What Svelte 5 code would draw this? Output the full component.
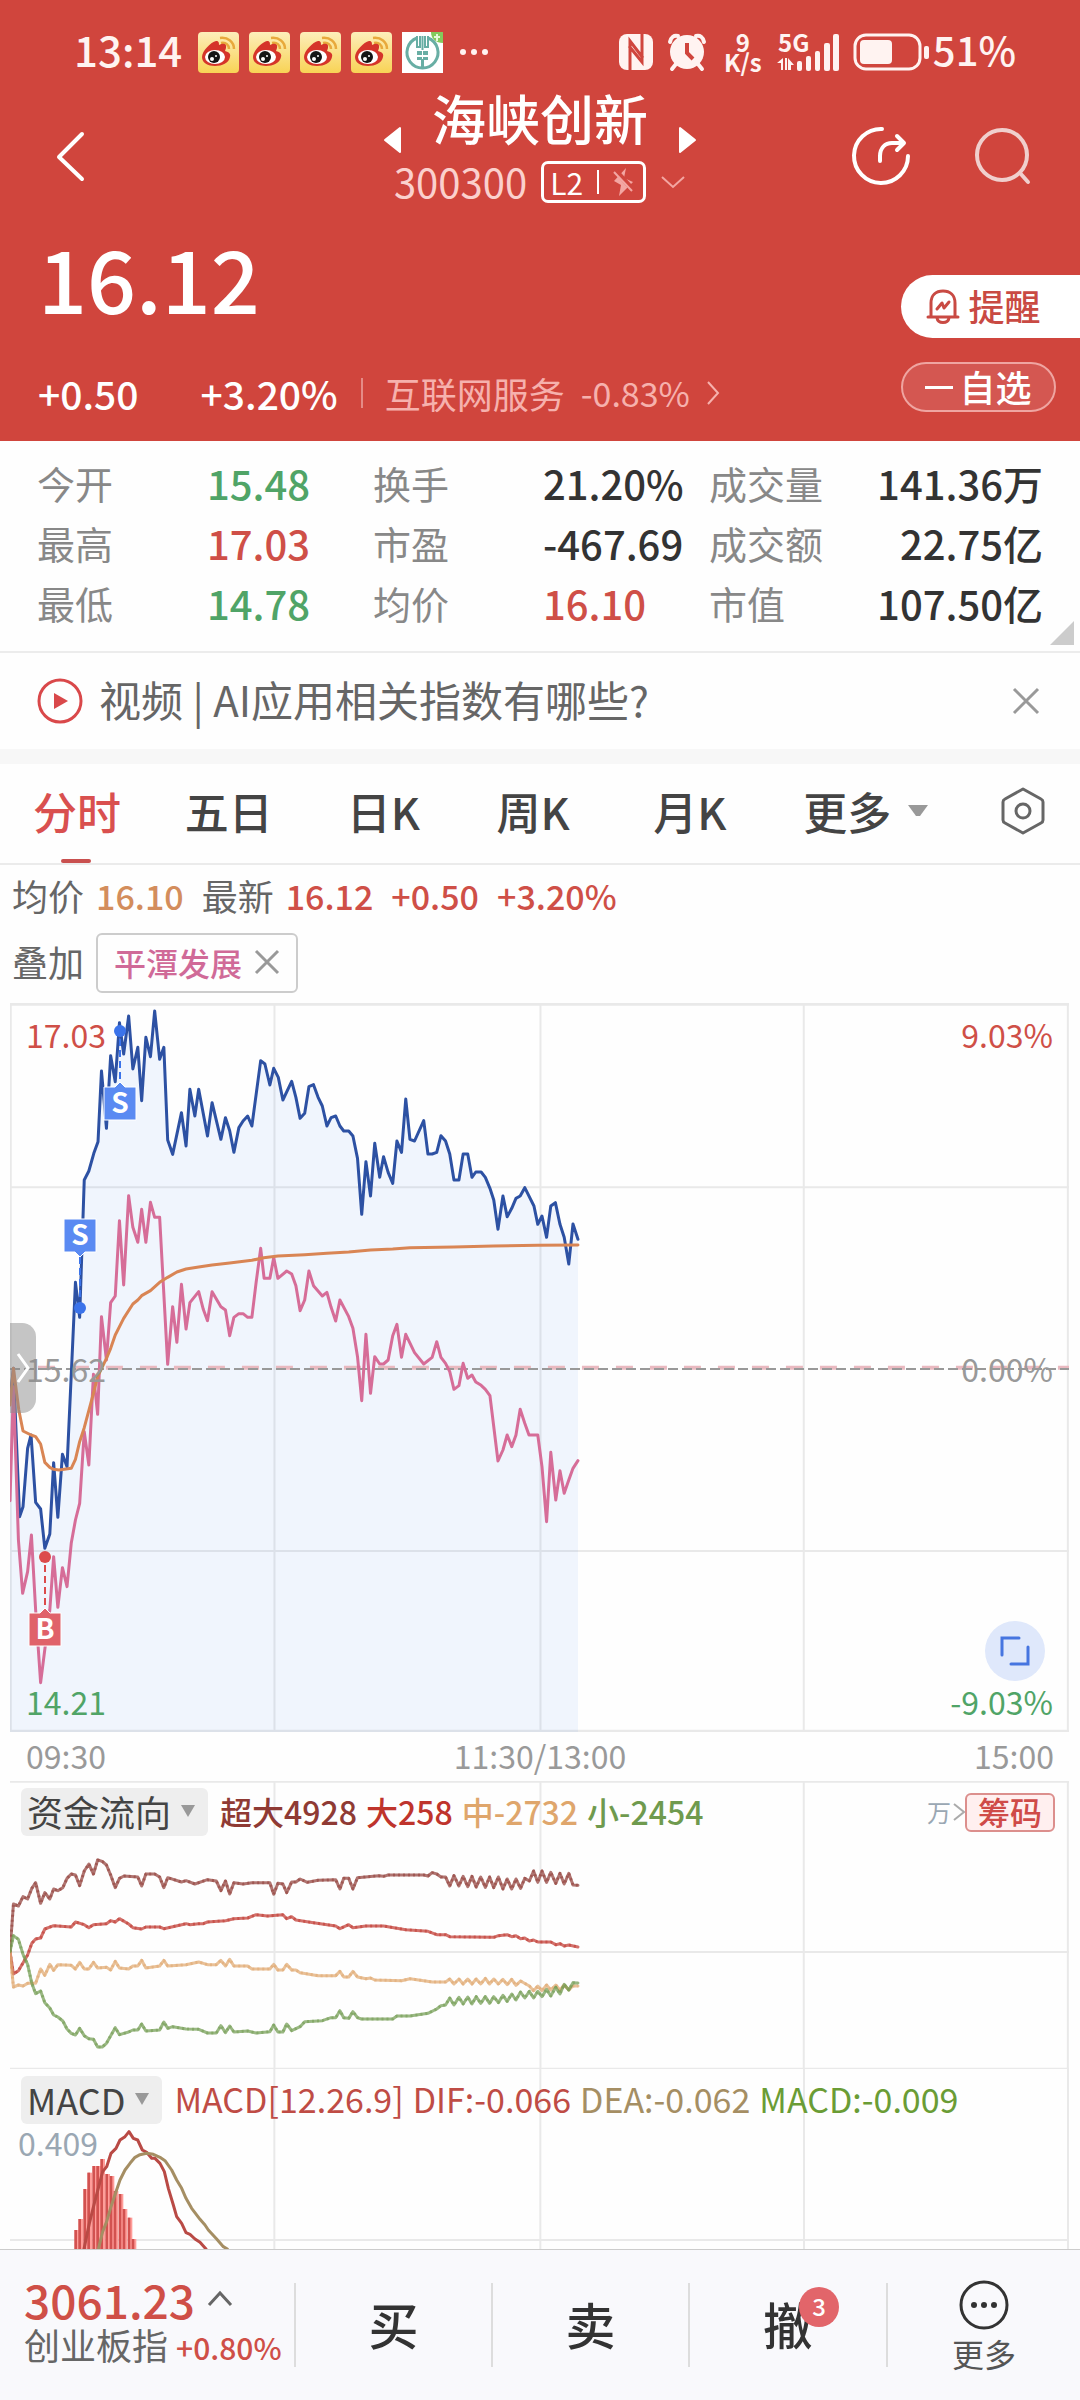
<script>
    let tabs = ["分时", "五日", "日K", "周K", "月K"];
    let active = "分时";
    let showNews = true;
    let showOverlay = true;

    let stats = [
        { label: "今开", value: "15.48", tone: "green" },
        { label: "换手", value: "21.20%", tone: "" },
        { label: "成交量", value: "141.36万", tone: "" },
        { label: "最高", value: "17.03", tone: "red" },
        { label: "市盈", value: "-467.69", tone: "" },
        { label: "成交额", value: "22.75亿", tone: "" },
        { label: "最低", value: "14.78", tone: "green" },
        { label: "均价", value: "16.10", tone: "red" },
        { label: "市值", value: "107.50亿", tone: "" },
    ];

    // price chart lines
    let price = "26,1235 36,1135 52,1580 61,1550 73,1375 82,1335 94,1537 107,1557 118,1675 131,1632 141,1418 152,1582 164,1393 176,1430 190,1080 198,877 209,982 221,570 233,543 246,490 257,455 266,243 279,415 290,197 302,275 313,98 324,192 337,78 348,237 361,172 371,332 382,142 394,200 405,63 418,208 429,172 439,450 452,493 475,368 487,468 497,298 510,378 520,298 543,438 555,338 578,448 590,383 601,422 612,487 625,413 636,393 648,378 659,408 682,212 693,222 706,285 716,235 728,262 740,330 763,274 774,322 785,385 797,370 808,290 820,284 832,322 843,348 855,408 866,383 878,378 889,408 899,423 912,423 923,438 935,505 946,673 957,515 969,618 980,460 993,562 1003,500 1015,547 1027,580 1038,453 1050,487 1061,327 1072,448 1084,453 1108,392 1119,492 1130,492 1142,487 1153,437 1165,453 1176,492 1187,570 1200,570 1211,492 1223,492 1234,562 1244,546 1258,546 1269,562 1281,595 1291,630 1302,718 1315,618 1326,680 1338,655 1349,625 1360,618 1372,593 1396,648 1406,703 1417,678 1429,742 1440,648 1452,638 1464,703 1475,742 1487,822 1498,702 1511,748";
    let overlay = "27,1532 36,1190 49,1650 60,1810 73,1745 83,1635 94,1860 107,2078 131,1860 141,1700 152,1852 164,1733 176,1790 187,1660 198,1590 209,1540 221,1325 233,1425 245,1153 256,1273 266,980 279,1110 290,938 302,918 313,692 324,885 337,617 348,712 361,757 371,658 382,757 394,637 405,682 418,682 439,1123 452,950 463,1057 475,883 487,1017 497,938 520,905 532,958 543,992 555,905 578,950 590,960 601,1037 612,982 625,971 636,971 648,982 659,982 670,878 682,775 691,865 706,865 716,803 727,865 750,843 763,852 774,887 785,962 797,930 808,843 820,887 843,918 855,907 866,952 878,993 889,930 912,980 923,1015 935,1100 946,1232 957,1033 969,1210 980,1100 993,1122 1003,1122 1015,1110 1027,1037 1038,1003 1050,1102 1061,1033 1084,1088 1108,1122 1130,1102 1142,1055 1153,1102 1165,1120 1176,1145 1187,1198 1200,1187 1211,1120 1223,1165 1234,1155 1244,1176 1258,1186 1269,1198 1281,1217 1302,1413 1315,1380 1326,1335 1338,1370 1349,1335 1360,1258 1372,1300 1383,1335 1406,1335 1417,1430 1429,1595 1440,1387 1453,1530 1464,1442 1475,1510 1487,1470 1498,1435 1511,1412";
    let average = "27,1245 36,1135 50,1260 61,1323 82,1335 94,1340 107,1362 118,1417 131,1432 141,1438 155,1440 187,1435 198,1408 209,1355 221,1313 245,1210 256,1160 279,1105 290,1075 302,1035 324,985 348,942 361,930 371,917 394,902 418,877 439,862 463,846 487,837 520,831 555,825 601,819 659,811 690,803 727,798 797,794 855,790 912,786 969,780 1027,777 1072,773 1187,771 1290,768 1406,766 1511,765";

    let flows = [
        { name: "超大4928", color: "#8f3a34", points: "27,545 36,402 49,408 61,380 73,387 84,355 94,338 107,400 118,368 131,387 141,357 152,362 165,353 176,325 187,312 198,315 209,347 221,303 233,282 245,312 256,270 268,274 279,285 290,315 302,353 313,325 325,318 361,321 371,348 382,312 405,312 418,321 429,353 439,323 475,336 487,332 510,342 543,329 566,333 578,362 590,333 601,372 612,338 636,342 659,338 706,338 716,373 727,340 740,342 750,368 763,336 774,336 785,327 804,337 832,331 878,329 889,357 899,325 912,325 923,357 935,323 990,317 1003,319 1015,315 1108,315 1119,318 1130,308 1142,312 1153,321 1165,321 1176,348 1187,317 1200,348 1211,319 1223,350 1234,319 1245,351 1257,321 1269,352 1280,321 1291,353 1303,321 1315,357 1326,327 1338,357 1349,327 1361,355 1372,325 1384,333 1395,303 1406,337 1417,303 1429,337 1440,307 1453,340 1464,310 1475,342 1487,310 1498,345 1511,346" },
        { name: "大258", color: "#bf342c", points: "27,545 36,612 49,602 73,555 84,520 94,507 107,504 118,477 141,467 187,471 198,456 221,464 233,473 245,464 279,461 290,452 302,456 313,446 337,462 348,473 371,477 382,471 418,471 429,476 487,461 497,464 520,461 532,461 543,456 590,452 612,446 648,444 670,434 700,438 740,434 750,446 763,440 774,450 820,458 878,468 889,476 912,464 923,473 957,468 1003,468 1061,479 1119,484 1142,494 1165,494 1176,500 1291,502 1303,497 1326,494 1338,500 1349,497 1361,506 1372,504 1384,513 1395,510 1406,516 1440,516 1453,524 1464,521 1475,528 1487,525 1511,531" },
        { name: "中-2732", color: "#dfa66c", points: "27,545 36,651 49,645 61,648 73,640 94,640 107,597 118,616 131,583 141,601 152,584 187,586 198,597 209,577 221,597 233,597 245,577 256,594 279,592 290,600 302,574 313,594 337,597 348,588 361,588 371,571 382,594 418,588 429,571 439,588 487,584 520,576 543,584 566,584 578,571 590,588 601,568 612,588 648,588 659,597 706,597 716,583 727,600 740,600 750,583 763,600 774,600 785,608 832,617 878,617 889,604 899,621 912,621 923,604 935,621 957,626 969,624 980,630 1050,632 1072,626 1130,636 1165,636 1176,627 1187,642 1200,627 1211,642 1223,627 1234,642 1245,627 1257,642 1269,625 1280,642 1291,627 1303,642 1315,628 1326,644 1338,628 1349,646 1361,633 1384,648 1395,662 1406,648 1417,662 1429,645 1440,660 1453,645 1464,660 1475,645 1487,660 1498,648 1511,648" },
        { name: "小-2454", color: "#6f9a4e", points: "27,545 36,497 49,508 61,553 73,583 84,640 94,671 107,663 118,698 131,714 141,735 152,741 165,753 176,777 187,790 198,795 209,775 221,797 233,806 245,808 256,831 268,831 279,820 302,773 313,794 337,786 348,780 361,780 371,762 382,783 418,780 429,756 439,775 452,770 487,777 520,778 543,789 566,789 578,767 590,788 601,768 612,786 648,783 670,789 706,785 716,765 727,786 740,786 750,762 763,782 785,770 797,755 843,752 866,743 878,743 889,722 899,743 912,745 923,725 935,743 945,747 1027,747 1038,738 1072,738 1119,730 1142,717 1153,707 1165,705 1176,684 1187,705 1200,682 1211,702 1223,681 1234,702 1245,680 1257,700 1269,680 1280,700 1291,680 1303,698 1315,676 1326,694 1338,672 1349,690 1361,666 1372,684 1384,664 1395,684 1406,664 1417,680 1429,658 1440,678 1453,652 1464,672 1475,643 1487,660 1498,638 1511,639" },
    ];

    let bars = [[227,330],[239,297],[254,207],[266,158],[281,138],[293,138],[305,117],[320,162],[333,168],[345,213],[360,222],[372,267],[387,293],[399,357]];
    let dif = "252,387 268,310 283,250 308,155 320,140 333,100 348,85 360,60 375,50 387,35 400,55 413,60 427,90 440,97 455,115 465,115 480,130 493,155 505,205 520,255 530,290 545,310 558,338 570,343 585,357 600,367 618,387";
    let dea = "295,387 308,335 320,305 333,260 348,215 360,180 375,150 390,130 405,112 420,104 440,100 460,103 480,112 495,122 515,150 530,180 545,205 558,235 575,265 600,298 615,315 625,330 650,357 670,380 682,387";
</script>

{#snippet marker(letter)}
    <svg width="34" height="98" viewBox="0 0 34 98">
        <path d="M17 14V56" stroke="currentColor" stroke-width="2" stroke-dasharray="7 4" />
        <circle cx="17" cy="6" r="6" fill="currentColor" />
        <path class="tag" d="M1 62H12L17 57L22 62H33V95H1Z" />
        <text x="17" y="88" text-anchor="middle">{letter}</text>
    </svg>
{/snippet}

<main>
    <header>
        <div class="status">
            <span class="clock">13:14</span>
            <div class="apps">
                {#each [1, 2, 3, 4] as n}
                    <svg width="41" height="41" viewBox="0 0 41 41">
                        <defs>
                            <linearGradient id="wb{n}" x1="0" y1="0" x2="0" y2="1">
                                <stop offset="0" stop-color="#fdeebb" />
                                <stop offset="1" stop-color="#f8d355" />
                            </linearGradient>
                        </defs>
                        <rect width="41" height="41" rx="4" fill="url(#wb{n})" />
                        <path d="M22 6c8-1 14 4 14 11M23 11c5-1 8 2 8 6" fill="none" stroke="#e8a93c" stroke-width="2.500" />
                        <path d="M4 25c0-6 9-15 14-16 3 0 3 2 3 4 4-2 8-2 7 3l-1 3c4 1 6 3 5 6-1 6-8 9-15 9C10 34 4 31 4 25Z" fill="#d5342a" />
                        <ellipse cx="17" cy="25" rx="10" ry="7" fill="#fff" />
                        <circle cx="16" cy="25" r="6" fill="#151515" />
                        <circle cx="14" cy="27" r="2" fill="#fff" />
                        <circle cx="18" cy="24" r="1" fill="#fff" />
                    </svg>
                {/each}
                <svg width="41" height="41" viewBox="0 0 41 41">
                    <rect width="41" height="41" fill="#fff" />
                    <path d="M29 0H41V11C34 11 29 7 29 0Z" fill="#84c95c" />
                    <path d="M35 2v7M32 5h6" stroke="#e5f8d8" stroke-width="2" />
                    <path d="M15 6A15.500 15.500 0 1 0 26 6" fill="none" stroke="#68aea4" stroke-width="3" />
                    <path d="M15 4v11h3V4M26 4v11h-3V4M20.500 4v14" fill="none" stroke="#68aea4" stroke-width="2" />
                    <path d="M15 19h5v4h-5zM21 19h5v4h-5zM15 25h5v3h-5zM21 25h5v3h-5zM19 27h3v9h-3z" fill="#68aea4" />
                </svg>
            </div>
            <svg width="30" height="8" viewBox="0 0 30 8" fill="#fff3f1">
                <circle cx="4" cy="4" r="3" /><circle cx="15" cy="4" r="3" /><circle cx="26" cy="4" r="3" />
            </svg>
            <div class="signals">
                <svg width="34" height="36" viewBox="0 0 34 36">
                    <rect width="34" height="36" rx="8" fill="#fff3f1" />
                    <path d="M11 36V7L24 24M23 0V28L10 12" fill="none" stroke="#d0453d" stroke-width="3" />
                </svg>
                <svg class="alarm" width="38" height="38" viewBox="0 0 38 38">
                    <path d="M8 31L4 36M30 31L34 36M2 9C3 4 6 2 10 3M36 9C35 4 32 2 28 3" stroke="#fff3f1" stroke-width="4" stroke-linecap="round" fill="none" />
                    <circle cx="19" cy="19" r="17" fill="#fff3f1" />
                    <path d="M19 10V20L25 26" fill="none" stroke="#d0453d" stroke-width="4" />
                </svg>
                <span class="speed"><b>9</b><b>K/s</b></span>
                <svg class="cell" width="64" height="40" viewBox="0 0 64 40" fill="#fff3f1">
                    <text x="1" y="20" class="net">5G</text>
                    <path d="M0 31L6 26V38H4V31ZM8 26H10V38H8ZM11 26L17 33H14V38H11Z" />
                    <rect x="20" y="29" width="5" height="10" rx="2" />
                    <rect x="29" y="24" width="5" height="15" rx="2" />
                    <rect x="38" y="19" width="5" height="20" rx="2" />
                    <rect x="47" y="11" width="6" height="28" rx="2" />
                    <rect x="56" y="2" width="6" height="37" rx="2" />
                </svg>
                <svg class="battery" width="75" height="38" viewBox="0 0 75 38">
                    <rect x="1" y="2" width="65" height="34" rx="11" fill="none" stroke="#fff3f1" stroke-width="3" />
                    <rect x="6" y="7" width="32" height="24" rx="4" fill="#fff3f1" />
                    <rect x="70" y="13" width="5" height="13" rx="2" fill="#fff3f1" />
                </svg>
                <span class="clock percent">51%</span>
            </div>
        </div>

        <div class="nav">
            <div class="side">
                <button aria-label="返回">
                    <svg width="30" height="58" viewBox="0 0 30 58"><path d="M26 7L3 30L26 52" fill="none" stroke="#fff" stroke-width="4" stroke-linecap="round" stroke-linejoin="round" /></svg>
                </button>
            </div>
            <div class="name">
                <div class="name-row">
                    <button aria-label="上一只"><svg width="19" height="28" viewBox="0 0 19 28"><path d="M17 2V26L2 14Z" fill="#fff" stroke="#fff" stroke-width="2" stroke-linejoin="round" /></svg></button>
                    <h1>海峡创新</h1>
                    <button aria-label="下一只"><svg width="19" height="28" viewBox="0 0 19 28"><path d="M2 2V26L17 14Z" fill="#fff" stroke="#fff" stroke-width="2" stroke-linejoin="round" /></svg></button>
                </div>
                <div class="code-row">
                    <span class="code">300300</span>
                    <span class="level">L2<i></i>
                        <svg width="22" height="30" viewBox="0 0 22 30"><path d="M13 1L11 11L20 15L6 29L8 18L1 14Z" fill="#f3a6a2" /><path d="M2 3L21 24" stroke="#d0453d" stroke-width="5" /><path d="M1 5L19 24" stroke="#f3a6a2" stroke-width="2" /></svg>
                    </span>
                    <svg width="26" height="16" viewBox="0 0 26 16"><path d="M2 3L13 13L24 3" fill="none" stroke="#f3a6a2" stroke-width="2" /></svg>
                </div>
            </div>
            <div class="side right">
                <button aria-label="分享">
                    <svg width="58" height="58" viewBox="0 0 58 58" fill="none" stroke="#fff" stroke-width="4" stroke-linecap="round" stroke-linejoin="round">
                        <path d="M30 2A27 27 0 1 0 56 29M28 34V29C28 21 33 16 40 16H51M45 9L52 16L45 23" />
                    </svg>
                </button>
                <button aria-label="搜索">
                    <svg width="58" height="58" viewBox="0 0 58 58" fill="none" stroke="#f0cfcd" stroke-width="4" stroke-linecap="round">
                        <circle cx="28" cy="28" r="25" /><path d="M46 46L54 55" />
                    </svg>
                </button>
            </div>
        </div>

        <div class="quote">
            <div>
                <div class="last">16.12</div>
                <div class="change">
                    <span>+0.50</span>
                    <span class="pct">+3.20%</span>
                    <a href="#sector">互联网服务 <em>-0.83%</em>
                        <svg width="14" height="26" viewBox="0 0 14 26"><path d="M2 2L12 13L2 24" fill="none" stroke="#f6b1ad" stroke-width="2" /></svg>
                    </a>
                </div>
            </div>
            <div class="actions">
                <button class="alert">
                    <svg width="34" height="36" viewBox="0 0 34 36" fill="none" stroke="#c94a43" stroke-width="3" stroke-linejoin="round" stroke-linecap="round">
                        <path d="M5 27V14C5 6 10 2 17 2S29 6 29 14V27M2 28H32M11 29C12 35 22 35 23 29M11 20L16 14L18 19L23 13" />
                    </svg><span>提醒</span>
                </button>
                <button class="watch"><i></i><span>自选</span></button>
            </div>
        </div>
    </header>

    <dl class="stats">
        {#each stats as s, i}
            <dt>{s.label}</dt>
            <dd class={s.tone} class:last-col={i % 3 === 2}>{s.value}</dd>
        {/each}
    </dl>

    {#if showNews}
        <div class="news">
            <svg width="48" height="48" viewBox="0 0 48 48"><circle cx="24" cy="24" r="21" fill="none" stroke="#d9484a" stroke-width="3" /><path d="M18 16V32L32 24Z" fill="#d9484a" /></svg>
            <a href="#video">视频 | AI应用相关指数有哪些?</a>
            <button aria-label="关闭" on:click={() => (showNews = false)}>
                <svg width="28" height="28" viewBox="0 0 28 28"><path d="M2 2L26 26M26 2L2 26" stroke="#999" stroke-width="3" /></svg>
            </button>
        </div>
    {/if}

    <nav class="tabs">
        {#each tabs as tab}
            <button class:active={tab === active} on:click={() => (active = tab)}>{tab}</button>
        {/each}
        <button>更多<svg width="24" height="14" viewBox="0 0 24 14"><path d="M2 1H22L14 12H10Z" fill="#999" /></svg></button>
        <button aria-label="设置">
            <svg width="46" height="48" viewBox="0 0 46 48" fill="none" stroke="#666" stroke-width="3" stroke-linejoin="round"><path d="M23 2L41 12Q43 13 43 15V33Q43 35 41 36L23 46L5 36Q3 35 3 33V15Q3 13 5 12Z" /><circle cx="23" cy="24" r="7" /></svg>
        </button>
    </nav>

    <div class="info">
        <span>均价</span><b class="orange">16.10</b>
        <span class="gap">最新</span><b>16.12</b>
        <b class="gap">+0.50</b><b class="gap">+3.20%</b>
    </div>
    <div class="info compare">
        <span>叠加</span>
        {#if showOverlay}
            <button on:click={() => (showOverlay = false)}>平潭发展
                <svg width="26" height="26" viewBox="0 0 26 26"><path d="M2 2L24 24M24 2L2 24" stroke="#999" stroke-width="3" /></svg>
            </button>
        {/if}
    </div>

    <section class="chart">
        <svg class="plot" viewBox="27 39 2767 2187" preserveAspectRatio="none">
            <path class="grid" d="M27 592H2794M27 1683H2794M718 39V2226M1413 39V2226M2101 39V2226M29 39V2226M2791 39V2226" />
            <path class="grid edge" d="M27 43H2794M27 2224H2794" />
            <polygon points="{price} 1511,2226 27,2226" fill="#3f7cf4" fill-opacity="0.070" />
            <path class="zero-pink" d="M100 1133H2794" />
            <path class="zero" d="M27 1137H2794" />
            <polyline points={price} stroke="#2d51a3" />
            {#if showOverlay}
                <polyline points={overlay} stroke="#d66d98" />
            {/if}
            <polyline points={average} stroke="#d98554" />
        </svg>
        <span class="mark red tl">17.03</span>
        <span class="mark red tr">9.03%</span>
        <span class="mark grey ml">15.62</span>
        <span class="mark grey mr">0.00%</span>
        <span class="mark green bl">14.21</span>
        <span class="mark green br">-9.03%</span>
        <div class="pin s1">
            <svg width="34" height="98" viewBox="0 0 34 98">
                <path d="M17 40V82" stroke="currentColor" stroke-width="2" stroke-dasharray="7 4" />
                <circle cx="17" cy="91" r="6" fill="currentColor" />
                <path class="tag" d="M1 2H33V35H22L17 40L12 35H1Z" />
                <text x="17" y="28" text-anchor="middle">S</text>
            </svg>
        </div>
        <div class="pin s2">{@render marker("S")}</div>
        <div class="pin b1">{@render marker("B")}</div>
        <button class="drawer" aria-label="展开">
            <svg width="14" height="32" viewBox="0 0 14 32"><path d="M2 2L12 16L2 30" fill="none" stroke="#fff" stroke-width="3" /></svg>
        </button>
        <button class="expand" aria-label="全屏">
            <svg width="30" height="30" viewBox="0 0 30 30"><path d="M2 19V2H19M28 11V28H11" fill="none" stroke="#4675e0" stroke-width="3" stroke-linecap="round" /></svg>
        </button>
    </section>
    <div class="axis"><span>09:30</span><span>11:30/13:00</span><span>15:00</span></div>

    <section class="panel">
        <svg class="plot" viewBox="27 33 2767 864" preserveAspectRatio="none">
            <path class="grid" d="M27 35H2794M27 546H2794M27 896H2794M718 33V897M1413 33V897M2101 33V897M2791 33V897" />
            {#each flows as f}
                <polyline class="soft" points={f.points} stroke={f.color} />
                <polyline class="dots" points={f.points} stroke={f.color} />
            {/each}
        </svg>
        <div class="legend">
            <button class="pick">资金流向<svg width="16" height="14" viewBox="0 0 16 14"><path d="M1 1H15L8 13Z" fill="#999" /></svg></button>
            {#each flows as f}
                <span style="color:{f.color}">{f.name}</span>
            {/each}
            <small>万<svg width="12" height="20" viewBox="0 0 12 20"><path d="M1 2L11 10L1 18" fill="none" stroke="#aaa" stroke-width="2" /></svg></small>
            <button class="chips">筹码</button>
        </div>
    </section>

    <section class="panel macd">
        <svg class="plot" viewBox="30 -153 3177 540" preserveAspectRatio="none">
            <path class="grid" d="M30 360H3207M823 -153V387M1621 -153V387M2412 -153V387M3204 -153V387" />
            {#each bars as [x, y]}
                <rect x={x - 3} {y} width="13" height={387 - y} fill="#ff9d99" />
            {/each}
            {#each bars as [x, y]}
                <rect x={x - 4} {y} width="8" height={387 - y} fill="#d25250" />
            {/each}
            <polyline points={dif} stroke="#b94a45" />
            <polyline points={dea} stroke="#a58e63" />
        </svg>
        <div class="legend">
            <button class="pick">MACD<svg width="16" height="14" viewBox="0 0 16 14"><path d="M1 1H15L8 13Z" fill="#999" /></svg></button>
            <span class="dif">MACD[12.26.9]</span>
            <span class="dif">DIF:-0.066</span>
            <span class="dea">DEA:-0.062</span>
            <span class="hist">MACD:-0.009</span>
        </div>
        <div class="scale">0.409</div>
    </section>

    <footer>
        <a class="index" href="#index">
            <strong>3061.23
                <svg width="26" height="16" viewBox="0 0 26 16"><path d="M2 14L13 2L24 14" fill="none" stroke="#666" stroke-width="3" /></svg>
            </strong>
            <span>创业板指 <em>+0.80%</em></span>
        </a>
        <button>买</button>
        <button>卖</button>
        <button><span class="cancel">撤<i>3</i></span></button>
        <button class="more">
            <svg width="52" height="52" viewBox="0 0 52 52"><circle cx="26" cy="26" r="23" fill="none" stroke="#333" stroke-width="3" /><circle cx="16" cy="26" r="3" fill="#333" /><circle cx="26" cy="26" r="3" fill="#333" /><circle cx="36" cy="26" r="3" fill="#333" /></svg>
            更多
        </button>
    </footer>
</main>

<style>
    :global(body) {
        margin: 0;
        background: #fefefe;
    }
    main {
        min-height: 100vh;
        display: flex;
        flex-direction: column;
        font-family: "Noto Sans CJK SC", "Noto Sans", sans-serif;
        color: #333;
    }
    button {
        border: 0;
        padding: 0;
        background: none;
        font: inherit;
        color: inherit;
        display: flex;
        align-items: center;
        justify-content: center;
    }
    a {
        color: inherit;
        text-decoration: none;
    }
    em {
        font-style: normal;
    }
    svg {
        display: block;
        flex-shrink: 0;
        overflow: visible;
    }
    header {
        background: #d0453d;
        color: #fff;
        padding-bottom: 23px;
    }
    .status {
        height: 72px;
        padding: 16px 64px 0 74px;
        display: flex;
        align-items: center;
        color: #fff3f1;
    }
    .clock {
        font-size: 42px;
        line-height: 66px;
        font-weight: 500;
        padding-bottom: 6px;
    }
    .percent {
        font-size: 40px;
    }
    .apps {
        display: flex;
        gap: 10px;
        margin: 0 16px;
    }
    .signals {
        margin-left: auto;
        display: flex;
        align-items: center;
    }
    .alarm {
        margin: 0 16px 0 15px;
    }
    .speed {
        width: 42px;
        margin-right: 13px;
        display: flex;
        flex-direction: column;
        align-items: center;
        font-size: 24px;
        line-height: 20px;
    }
    .net {
        font-size: 24px;
        font-weight: 700;
    }
    .battery {
        margin: 0 4px 0 13px;
    }
    .nav {
        display: grid;
        grid-template-columns: 1fr auto 1fr;
        padding: 0 48px;
    }
    .side {
        padding: 39px 0 0 8px;
        display: flex;
        align-items: flex-start;
    }
    .right {
        justify-content: flex-end;
        gap: 64px;
    }
    .name-row {
        display: flex;
        align-items: center;
        justify-content: center;
        gap: 30px;
    }
    .name-row button {
        padding-top: 38px;
        align-self: flex-start;
    }
    h1 {
        margin: 0;
        padding-bottom: 6px;
        font-size: 54px;
        line-height: 54px;
        font-weight: 500;
    }
    .name {
        height: 116px;
    }
    .code-row {
        display: flex;
        align-items: center;
        justify-content: center;
        gap: 14px;
        height: 44px;
        margin-top: 6px;
    }
    .code {
        font-size: 40px;
        line-height: 42px;
        padding-bottom: 2px;
        color: #fbd0cd;
    }
    .level {
        display: flex;
        align-items: center;
        gap: 14px;
        height: 36px;
        padding: 0 8px 0 6px;
        border: 3px solid #fff;
        border-radius: 7px;
        font-size: 30px;
        line-height: 34px;
    }
    .level i {
        width: 2px;
        height: 24px;
        background: #fff;
    }
    .quote {
        display: flex;
        justify-content: space-between;
        padding-left: 38px;
    }
    .last {
        margin-top: 23px;
        font-size: 86px;
        line-height: 100px;
        font-weight: 500;
    }
    .change {
        display: flex;
        align-items: center;
        margin-top: 41px;
        font-size: 39px;
        line-height: 50px;
        font-weight: 500;
    }
    .pct {
        margin: 0 23px 0 62px;
    }
    .change a {
        display: flex;
        align-items: center;
        gap: 16px;
        height: 30px;
        padding-left: 22px;
        border-left: 2px solid #e58b86;
        font-size: 36px;
        font-weight: 400;
        color: #f6b1ad;
    }
    .change em {
        font-size: 34px;
    }
    .actions {
        margin-top: 71px;
        display: flex;
        flex-direction: column;
        gap: 24px;
        width: 179px;
    }
    .actions span {
        padding-bottom: 3px;
    }
    .alert {
        height: 63px;
        gap: 8px;
        padding-right: 14px;
        border-radius: 32px 0 0 32px;
        background: #fff;
        color: #c94a43;
        font-size: 36px;
        font-weight: 500;
    }
    .watch {
        box-sizing: border-box;
        width: 155px;
        height: 50px;
        gap: 6px;
        border: 2px solid #efa5a1;
        border-radius: 25px;
        background: #d45751;
        font-size: 36px;
        line-height: 40px;
        font-weight: 500;
    }
    .watch i {
        width: 28px;
        height: 3px;
        background: #fff;
    }
    .stats {
        margin: 0;
        padding: 12px 37px 18px;
        display: grid;
        grid-template-columns: 170fr 166fr 170fr 166fr 118fr 216fr;
        line-height: 60px;
        font-size: 40px;
        border-bottom: 2px solid #ececec;
        position: relative;
    }
    .stats::after {
        content: "";
        position: absolute;
        right: 6px;
        bottom: 6px;
        border-left: 24px solid transparent;
        border-bottom: 24px solid #ccc;
    }
    dt {
        font-size: 38px;
        color: #888;
        white-space: nowrap;
    }
    dd {
        margin: 0;
        font-weight: 500;
    }
    .last-col {
        text-align: right;
    }
    .red {
        color: #cf4f47;
    }
    .green {
        color: #50a467;
    }
    .grey {
        color: #999;
    }
    .news {
        display: flex;
        align-items: center;
        height: 96px;
        padding: 0 40px 0 36px;
        gap: 15px;
        font-size: 42px;
        color: #666;
    }
    .news a {
        flex: 1;
        padding-bottom: 6px;
    }
    .tabs {
        display: grid;
        grid-template-columns: 152fr 162fr 150fr 157fr 150fr 197fr 46px;
        height: 99px;
        padding: 0 34px 0 33px;
        border-top: 15px solid #f7f7f7;
        border-bottom: 2px solid #ebebeb;
        font-size: 44px;
        font-weight: 500;
        color: #444;
    }
    .tabs button {
        justify-self: start;
        position: relative;
        padding-bottom: 5px;
        gap: 15px;
    }
    .tabs .active {
        color: #d9504f;
    }
    .active::after {
        content: "";
        position: absolute;
        left: 28px;
        bottom: 0;
        width: 30px;
        height: 4px;
        border-radius: 2px;
        background: #c9504f;
    }
    .info {
        display: flex;
        align-items: center;
        height: 50px;
        margin-top: 5px;
        padding-left: 12px;
        gap: 12px;
        font-size: 36px;
        color: #666;
    }
    .info b {
        font-size: 34px;
        font-weight: 500;
        color: #cf4f47;
    }
    .info .orange {
        color: #d38d5c;
    }
    .info .gap {
        margin-left: 6px;
    }
    .compare {
        height: 60px;
        margin: 13px 0 10px;
    }
    .compare span {
        padding-bottom: 4px;
    }
    .compare button {
        box-sizing: border-box;
        height: 60px;
        padding: 0 16px 2px;
        gap: 12px;
        border: 2px solid #ccc;
        border-radius: 6px;
        font-size: 32px;
        font-weight: 500;
        color: #d06a98;
    }
    .chart,
    .panel {
        position: relative;
        margin: 0 11px 0 10px;
    }
    .plot {
        width: 100%;
        height: 729px;
        overflow: hidden;
    }
    .plot path,
    .plot polyline {
        fill: none;
        vector-effect: non-scaling-stroke;
    }
    .plot polyline {
        stroke-width: 3px;
        stroke-linejoin: round;
        stroke-linecap: round;
    }
    .plot .soft {
        stroke-opacity: 0.7;
    }
    .plot .dots {
        stroke-dasharray: 2 3;
        stroke-opacity: 0.5;
        stroke-linecap: butt;
    }
    .grid {
        stroke: #e9e9e9;
        stroke-width: 2px;
    }
    .edge {
        stroke-width: 3px;
    }
    .zero {
        stroke: #999;
        stroke-width: 2px;
        stroke-dasharray: 10 4;
    }
    .zero-pink {
        stroke: #e9b9c0;
        stroke-width: 4px;
        stroke-dasharray: 17 17;
    }
    .mark {
        position: absolute;
        font-size: 32px;
        line-height: 38px;
    }
    .tl,
    .ml,
    .bl {
        left: 16px;
    }
    .tr,
    .mr,
    .br {
        right: 16px;
    }
    .tl,
    .tr {
        top: 12px;
    }
    .ml,
    .mr {
        top: 346px;
    }
    .bl,
    .br {
        bottom: 12px;
    }
    .pin {
        position: absolute;
        width: 34px;
        margin-left: -17px;
        color: #3b73ea;
    }
    .pin text {
        fill: #fff;
        font-size: 28px;
        font-weight: 700;
    }
    .pin :global(.tag) {
        fill: #5a8af2;
        stroke: #fff;
        stroke-width: 1px;
    }
    .s1 {
        left: 6.6%;
        top: 214px;
    }
    .s2 {
        left: 10.4%;
        top: 22px;
    }
    .b1 {
        left: 3.3%;
        top: 548px;
        color: #dc4b4b;
    }
    .b1 :global(.tag) {
        fill: #e0626a;
    }
    .drawer {
        position: absolute;
        left: 0;
        top: 320px;
        width: 26px;
        height: 90px;
        border-radius: 0 14px 14px 0;
        background: rgba(140, 140, 140, 0.5);
    }
    .expand {
        position: absolute;
        right: 24px;
        top: 618px;
        width: 60px;
        height: 60px;
        border-radius: 50%;
        background: #dfe8fb;
    }
    .axis {
        display: grid;
        grid-template-columns: 1fr auto 1fr;
        height: 49px;
        padding: 0 26px;
        font-size: 32px;
        line-height: 46px;
        color: #999;
    }
    .axis span:last-child {
        text-align: right;
    }
    .panel .plot {
        height: 288px;
    }
    .legend {
        position: absolute;
        top: 6px;
        left: 11px;
        right: 14px;
        display: flex;
        align-items: center;
        gap: 9px;
        font-size: 32px;
        line-height: 48px;
        font-weight: 500;
        white-space: nowrap;
    }
    .legend span {
        padding-bottom: 2px;
    }
    .pick {
        height: 48px;
        padding: 0 12px 2px 6px;
        margin-right: 3px;
        gap: 9px;
        border-radius: 6px;
        background: #eee;
        font-size: 36px;
        line-height: 44px;
        font-weight: 400;
        color: #444;
    }
    .legend small {
        display: flex;
        align-items: center;
        margin-left: auto;
        gap: 2px;
        font-size: 24px;
        font-weight: 400;
        color: #9aa7b3;
    }
    .chips {
        box-sizing: border-box;
        width: 90px;
        height: 39px;
        margin-left: -9px;
        padding-bottom: 3px;
        border: 2px solid #dc8f8d;
        border-radius: 6px;
        background: #ffefef;
        color: #cf4b48;
        line-height: 32px;
    }
    .macd .plot {
        height: 180px;
    }
    .macd .legend {
        font-size: 34px;
        font-weight: 400;
    }
    .dif {
        color: #bf4c45;
    }
    .dea {
        color: #a58e63;
    }
    .hist {
        color: #6a9c35;
    }
    .scale {
        position: absolute;
        left: 8px;
        top: 52px;
        font-size: 32px;
        line-height: 42px;
        color: #9aa7b3;
    }
    footer {
        flex: 1;
        display: grid;
        grid-template-columns: 294fr 197fr 197fr 198fr 194fr;
        border-top: 1px solid #ccc;
        background: #f9f9fc;
        padding-top: 33px;
    }
    footer > * {
        height: 84px;
        border-left: 2px solid #ddd;
    }
    footer > :first-child {
        border-left: 0;
    }
    footer button {
        font-size: 50px;
        font-weight: 500;
        padding-bottom: 5px;
        height: 84px;
    }
    .index {
        padding-left: 24px;
        font-size: 36px;
        line-height: 42px;
        color: #666;
        white-space: nowrap;
    }
    .index strong {
        display: flex;
        align-items: center;
        gap: 12px;
        font-size: 46px;
        line-height: 48px;
        font-weight: 500;
        color: #cf4f47;
        margin-top: -8px;
    }
    .index em {
        font-size: 30px;
        font-weight: 500;
        color: #cf4f47;
    }
    .cancel {
        position: relative;
    }
    .cancel i {
        position: absolute;
        left: 36px;
        top: 0;
        width: 40px;
        height: 40px;
        border-radius: 50%;
        background: #e2656a;
        color: #fff;
        font-size: 24px;
        line-height: 38px;
        font-style: normal;
        text-align: center;
    }
    footer .more {
        flex-direction: column;
        justify-content: flex-start;
        font-size: 32px;
        font-weight: 400;
        line-height: 44px;
        color: #555;
    }
    .more svg {
        margin-top: -4px;
    }
</style>
